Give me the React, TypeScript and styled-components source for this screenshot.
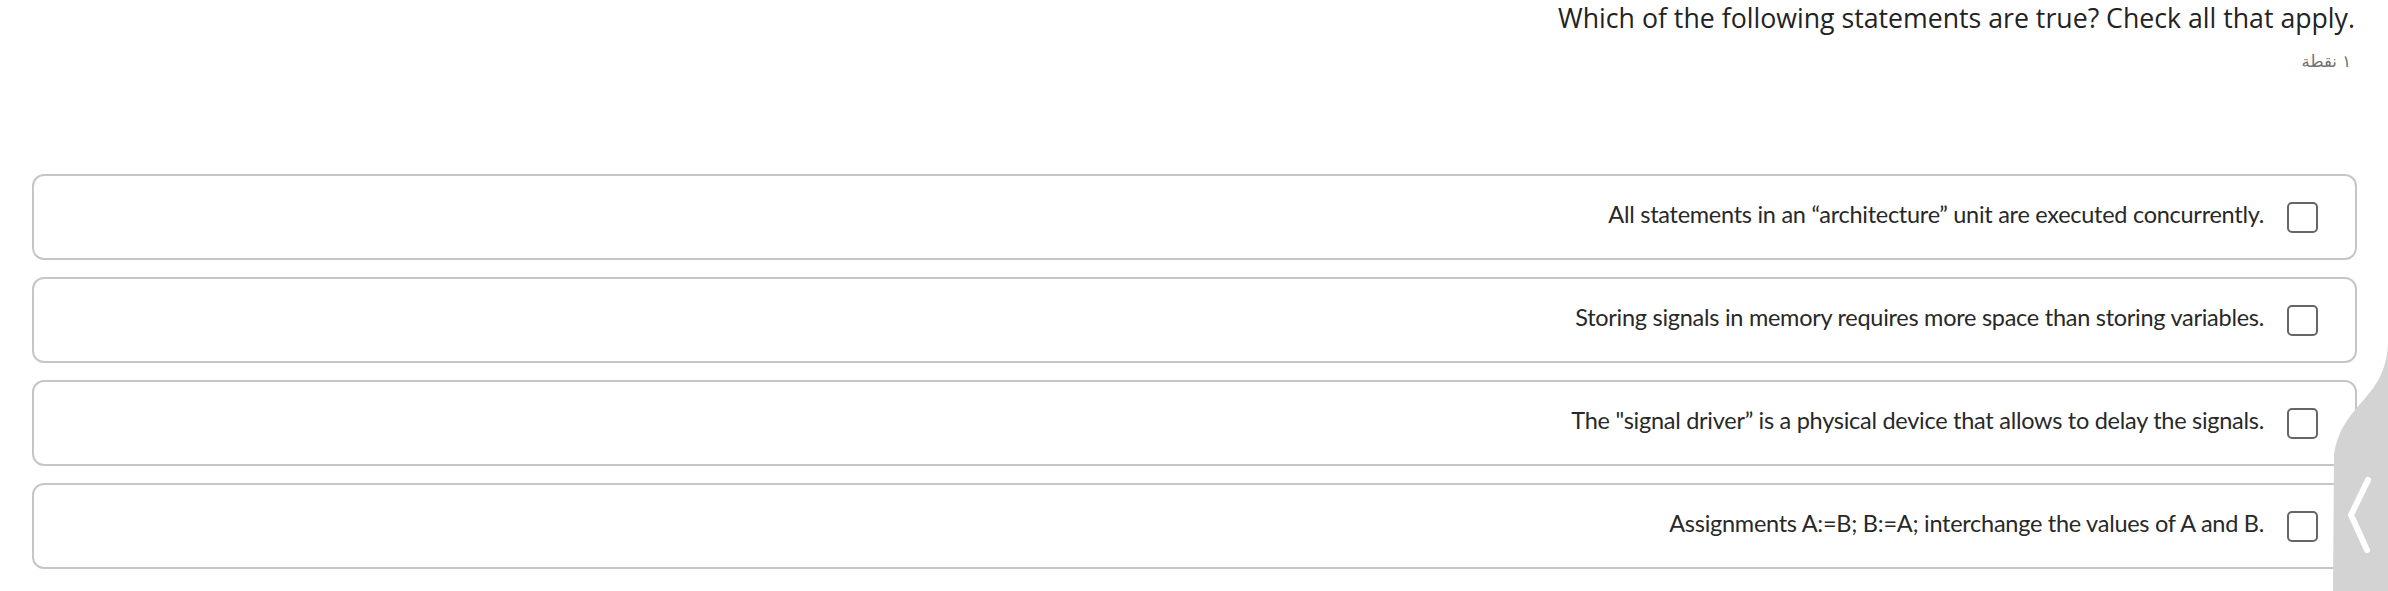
import React from "react";
import styled, { createGlobalStyle } from "styled-components";

const GlobalStyle = createGlobalStyle`
  html, body {
    margin: 0;
    padding: 0;
    background: #ffffff;
  }
  body {
    font-family: "Open Sans", "Noto Sans", sans-serif;
    color: #222222;
  }
`;

const Page = styled.div`
  position: relative;
  width: 100%;
  height: 591px;
  overflow: hidden;
  box-sizing: border-box;
  padding: 0 31px 0 32px;
`;

const Header = styled.header`
  display: flex;
  flex-direction: column;
  align-items: flex-end;
  padding-right: 2px;
`;

const Question = styled.h1`
  margin: 0;
  font-family: "Open Sans", "Noto Sans", sans-serif;
  font-weight: 400;
  font-size: 26.7px;
  line-height: 36px;
  color: #232323;
`;

const Points = styled.div`
  margin-top: 14px;
  font-family: "DejaVu Sans", "Noto Sans", sans-serif;
  font-size: 16.5px;
  line-height: 24px;
  color: #707070;
  padding-right: 4px;
`;

const Options = styled.div`
  display: flex;
  flex-direction: column;
  gap: 17px;
  margin-top: 100px;
`;

const Option = styled.label`
  display: flex;
  justify-content: flex-end;
  align-items: center;
  gap: 23px;
  height: 86px;
  box-sizing: border-box;
  padding-right: 37px;
  border: 2px solid #c6c6c6;
  border-radius: 12px;
  background: #ffffff;
`;

const OptionText = styled.span`
  font-family: Lato, "Noto Sans", sans-serif;
  font-size: 23.5px;
  letter-spacing: -0.27px;
  line-height: 32px;
  color: #282828;
  margin-bottom: 6px;
`;

const Box = styled.span`
  flex: none;
  width: 31px;
  height: 31px;
  box-sizing: border-box;
  border: 2px solid #666666;
  border-radius: 5px;
  background: #ffffff;
`;

const Handle = styled.svg`
  position: absolute;
  right: 0;
  top: 340px;
  width: 60px;
  height: 251px;
`;

const options = [
  "All statements in an \u201Carchitecture\u201D unit are executed concurrently.",
  "Storing signals in memory requires more space than storing variables.",
  "The \"signal driver\u201D is a physical device that allows to delay the signals.",
  "Assignments A:=B; B:=A; interchange the values of A and B.",
];

export default function App() {
  return (
    <>
      <GlobalStyle />
      <Page>
        <Header>
          <Question>Which of the following statements are true? Check all that apply.</Question>
          <Points dir="rtl">١ نقطة</Points>
        </Header>
        <Options>
          {options.map((t) => (
            <Option key={t}>
              <OptionText>{t}</OptionText>
              <Box />
            </Option>
          ))}
        </Options>
        <Handle viewBox="0 0 60 251">
          <path
            d="M60 3 C58 60 14 62 6 115 L5 251 L60 251 Z"
            fill="#d3d3d3"
          />
          <path
            d="M40 140 L23 175 L39 210"
            fill="none"
            stroke="#ffffff"
            strokeWidth="6"
            strokeLinecap="round"
            strokeLinejoin="round"
          />
        </Handle>
      </Page>
    </>
  );
}
